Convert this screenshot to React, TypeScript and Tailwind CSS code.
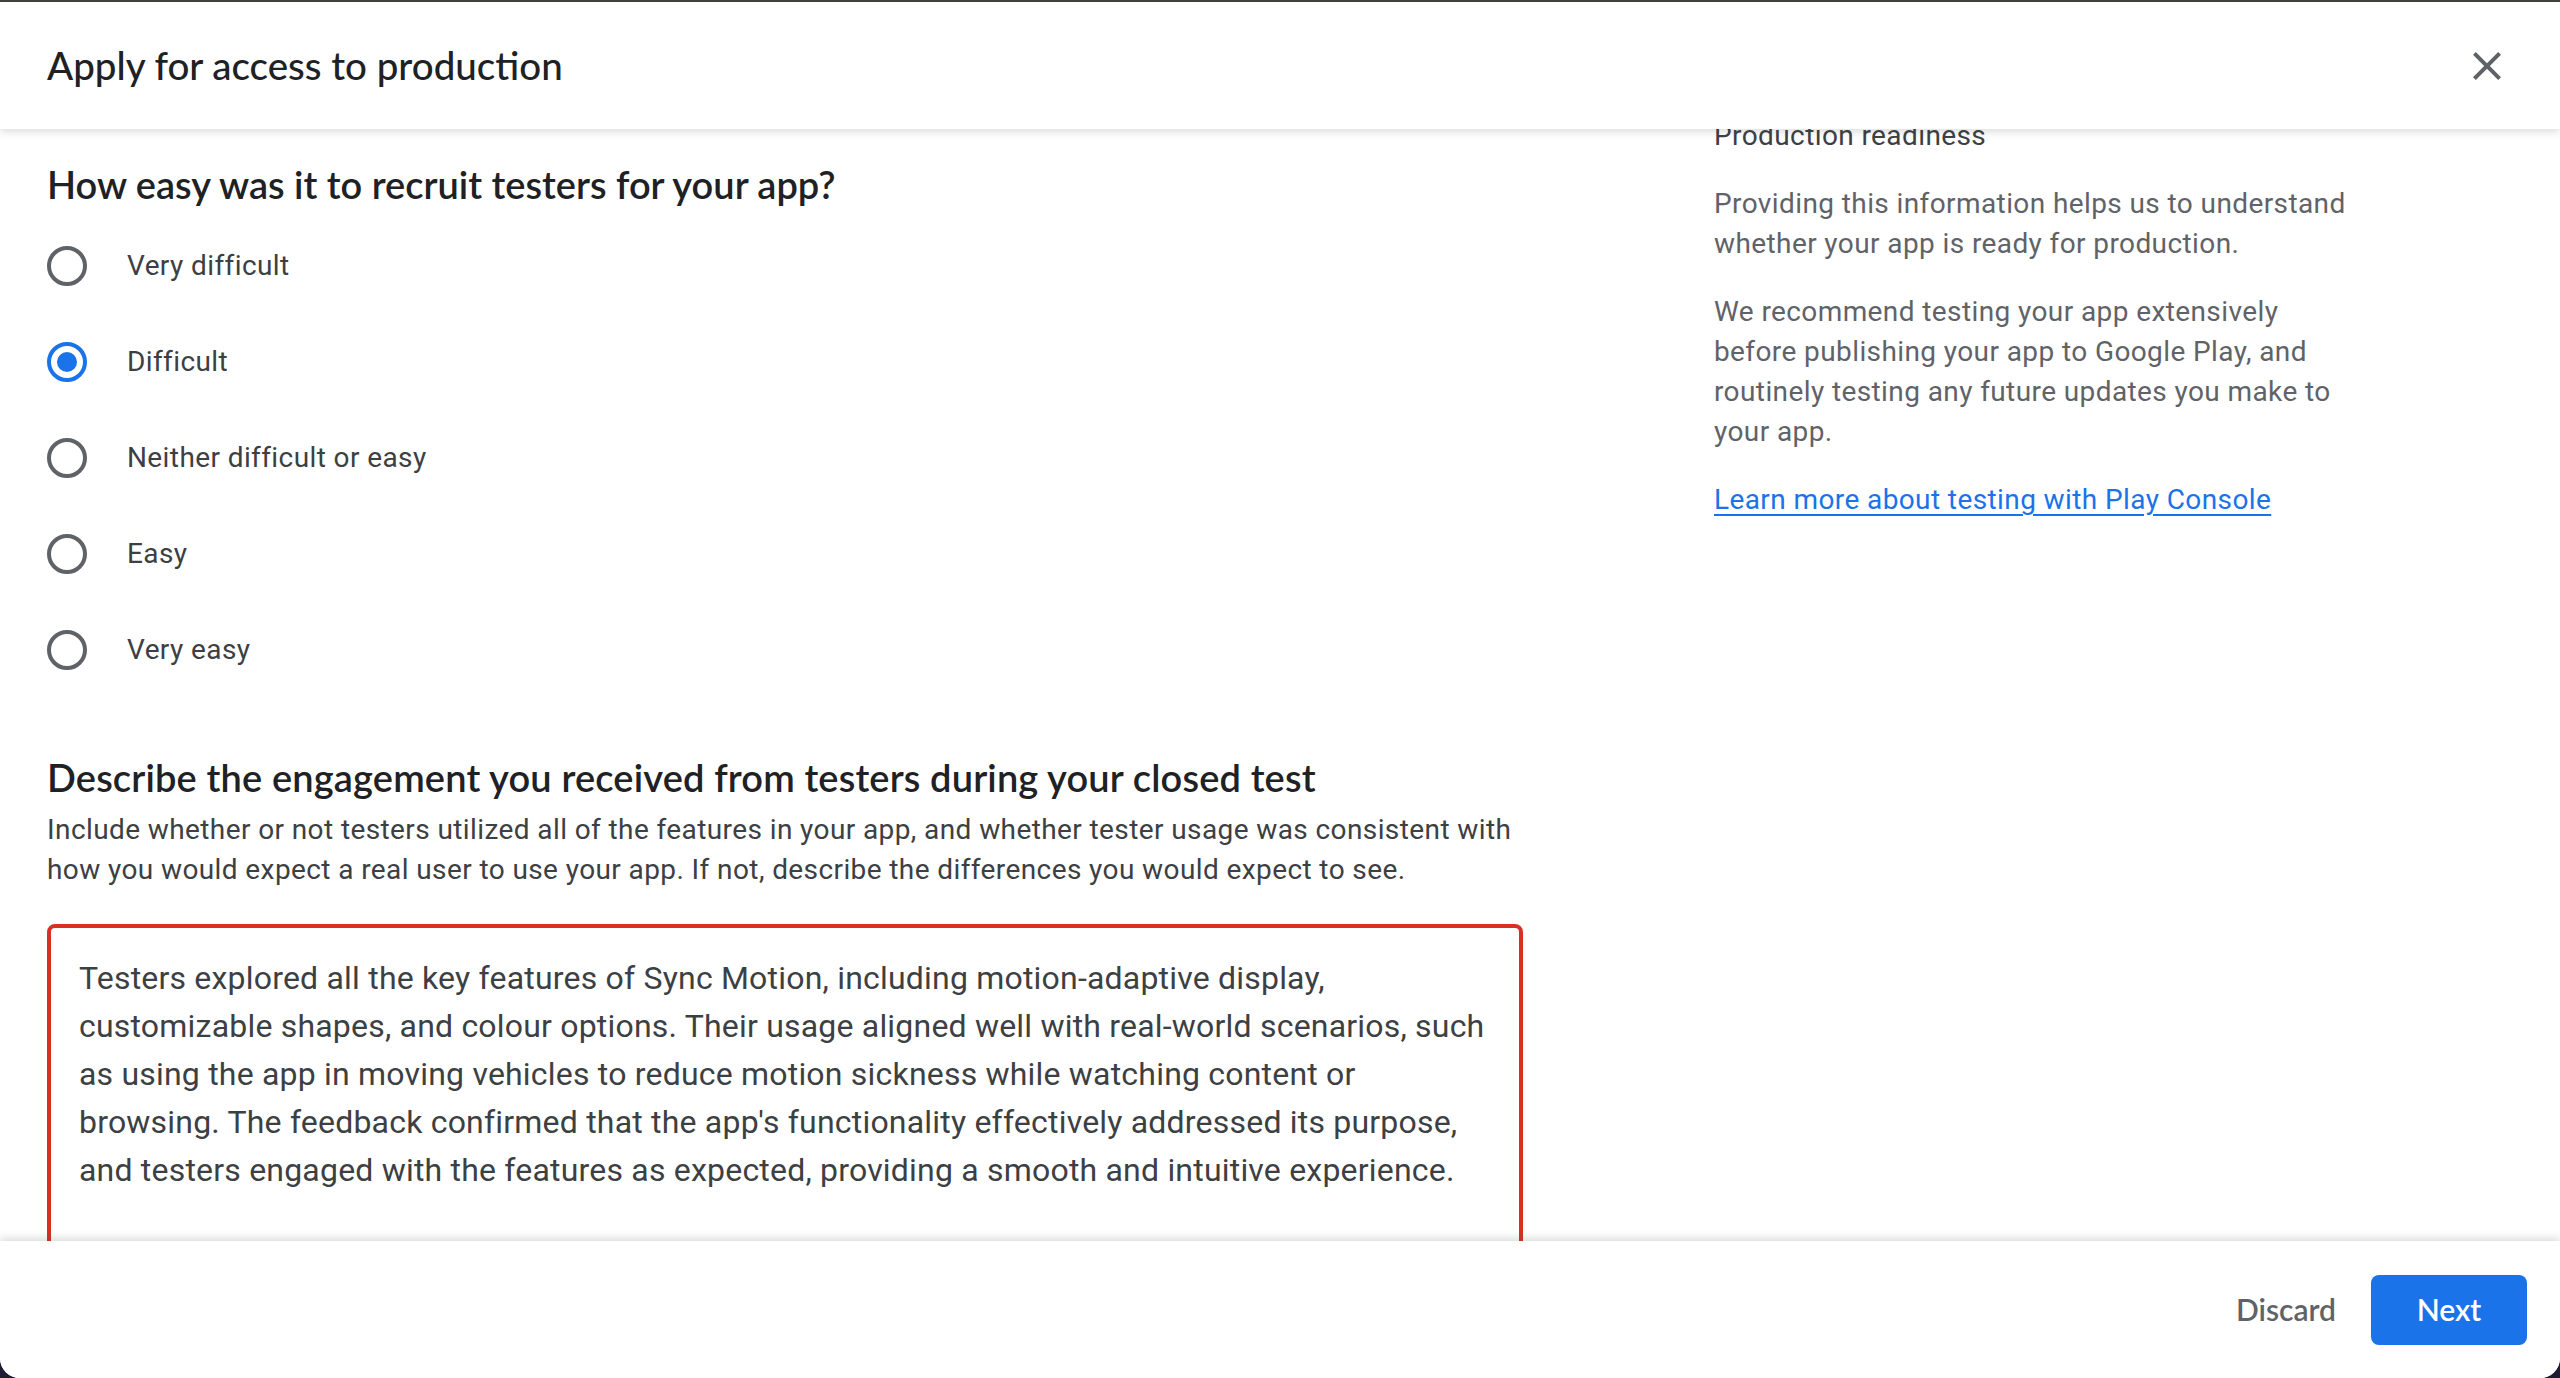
import React, { useState } from 'react';

const OPTIONS = ['Very difficult', 'Difficult', 'Neither difficult or easy', 'Easy', 'Very easy'];

const ANSWER =
  "Testers explored all the key features of Sync Motion, including motion-adaptive display, customizable shapes, and colour options. Their usage aligned well with real-world scenarios, such as using the app in moving vehicles to reduce motion sickness while watching content or browsing. The feedback confirmed that the app's functionality effectively addressed its purpose, and testers engaged with the features as expected, providing a smooth and intuitive experience.";

const heading = "font-['Lato',sans-serif]";
const body = "font-['Roboto',sans-serif] tracking-[0.4px]";

const CloseIcon: React.FC = () => (
  <svg width="48" height="48" viewBox="0 0 24 24" fill="#5f6368">
    <path d="M19 6.41L17.59 5 12 10.59 6.41 5 5 6.41 10.59 12 5 17.59 6.41 19 12 13.41 17.59 19 19 17.59 13.41 12z" />
  </svg>
);

const Radio: React.FC<{ checked: boolean }> = ({ checked }) => (
  <span
    className={`flex h-10 w-10 shrink-0 items-center justify-center rounded-full border-4 ${
      checked ? 'border-[#1a73e8]' : 'border-[#5f6368]'
    }`}
  >
    {checked && <span className="h-5 w-5 rounded-full bg-[#1a73e8]" />}
  </span>
);

export default function App() {
  const [choice, setChoice] = useState('Difficult');
  const [answer, setAnswer] = useState(ANSWER);

  return (
    <div className="flex h-[1378px] w-full flex-col overflow-hidden bg-[#1e1c35]">
      <div className="h-[2px] shrink-0 bg-[#3e433e]" />
      <div className="flex min-h-0 flex-1 flex-col overflow-hidden rounded-b-[20px] bg-white">
        {/* header */}
        <header className="relative z-10 flex h-[127px] shrink-0 items-center justify-between bg-white pl-[47px] pr-[49px] shadow-[0_3px_8px_rgba(60,64,67,0.18)]">
          <h1 className={`${heading} text-[38.5px] font-medium text-[#202124]`}>Apply for access to production</h1>
          <button className="flex h-12 w-12 items-center justify-center">
            <CloseIcon />
          </button>
        </header>

        {/* body */}
        <div className="flex min-h-0 flex-1 overflow-hidden pl-[47px]">
          <div className="w-[1476px] shrink-0 pt-[31px]">
            <h2 className={`${heading} text-[38px] font-semibold leading-[48px] text-[#202124]`}>
              How easy was it to recruit testers for your app?
            </h2>
            <div className="mt-[10px] flex flex-col">
              {OPTIONS.map((opt) => (
                <label
                  key={opt}
                  className="flex h-[96px] cursor-pointer items-center"
                  onClick={() => setChoice(opt)}
                >
                  <Radio checked={choice === opt} />
                  <span className={`${body} ml-10 text-[28px] leading-[40px] text-[#3c4043]`}>{opt}</span>
                </label>
              ))}
            </div>

            <h2 className={`${heading} mt-[55px] text-[38px] font-semibold leading-[48px] tracking-[0.15px] text-[#202124]`}>
              Describe the engagement you received from testers during your closed test
            </h2>
            <p className={`${body} mt-[9px] text-[28px] leading-[40px] text-[#3c4043]`}>
              Include whether or not testers utilized all of the features in your app, and whether tester usage was
              consistent with how you would expect a real user to use your app. If not, describe the differences you
              would expect to see.
            </p>
            <textarea
              value={answer}
              onChange={(e) => setAnswer(e.target.value)}
              className={`font-['Roboto',sans-serif] tracking-[0.2px] mt-[34px] block h-[380px] w-full resize-none rounded-[8px] border-4 border-[#d93025] px-[28px] pt-[26px] text-[32px] leading-[48px] text-[#3c4043] outline-none`}
            />
          </div>

          <aside className={`${body} ml-[191px] -mt-[13px] w-[640px] shrink-0 text-[28px] leading-[40px] text-[#5f6368]`}>
            <h3 className="text-[#3c4043]">Production readiness</h3>
            <p className="mt-[28px]">
              Providing this information helps us to understand whether your app is ready for production.
            </p>
            <p className="mt-[28px]">
              We recommend testing your app extensively before publishing your app to Google Play, and routinely
              testing any future updates you make to your app.
            </p>
            <a href="#" className="mt-[28px] block text-[#1a73e8] underline underline-offset-[5px]">
              Learn more about testing with Play Console
            </a>
          </aside>
        </div>

        {/* footer */}
        <footer className="relative z-10 flex h-[137px] shrink-0 items-center justify-end gap-[11px] bg-white pr-[33px] shadow-[0_-3px_8px_rgba(60,64,67,0.18)]">
          <button className={`${heading} h-[70px] rounded-[8px] px-6 text-[30px] font-semibold text-[#5f6368]`}>
            Discard
          </button>
          <button
            className={`${heading} h-[70px] w-[156px] rounded-[8px] bg-[#1a73e8] text-[30px] font-semibold text-white`}
          >
            Next
          </button>
        </footer>
      </div>
    </div>
  );
}
